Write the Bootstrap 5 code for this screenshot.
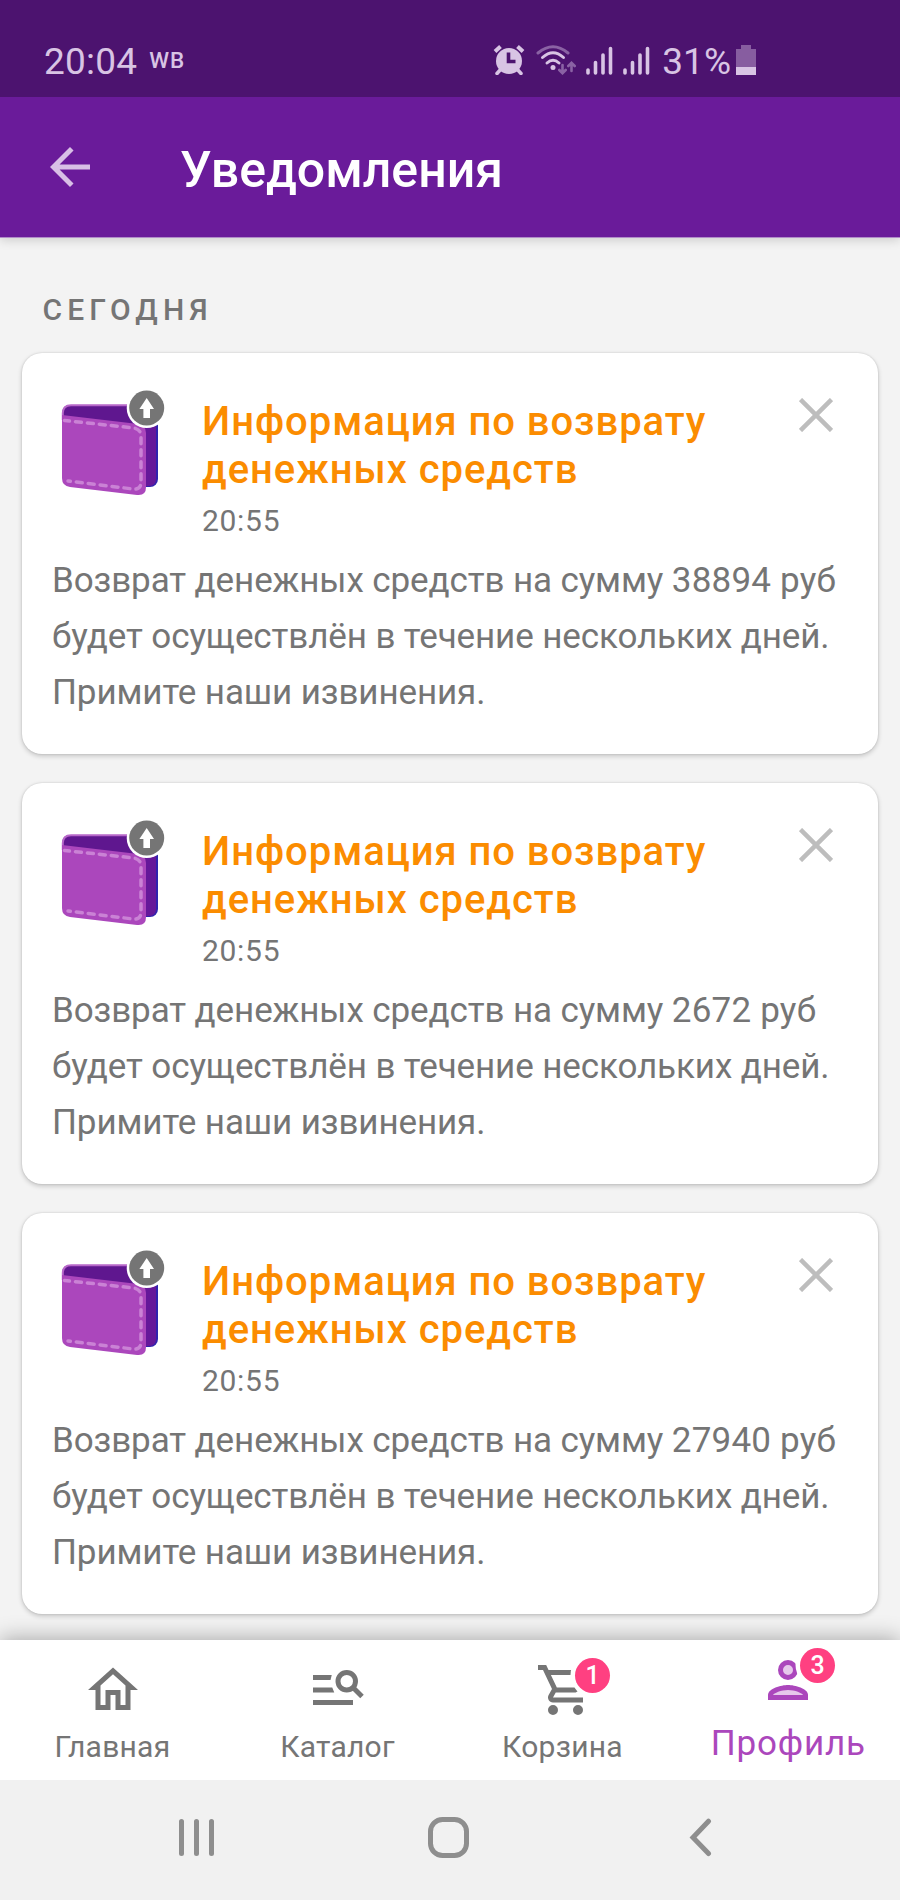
<!DOCTYPE html>
<html lang="ru">
<head>
<meta charset="utf-8">
<meta name="viewport" content="width=device-width, initial-scale=1">
<title>Уведомления</title>
<link href="https://cdn.jsdelivr.net/npm/bootstrap@5.3.0/dist/css/bootstrap.min.css" rel="stylesheet">
<script src="https://cdn.jsdelivr.net/npm/bootstrap@5.3.0/dist/js/bootstrap.bundle.min.js"></script>
<style>
body{font-family:Roboto,"Liberation Sans",sans-serif;background:#f3f3f3;color:#757575;width:900px;height:1900px;overflow:hidden}
svg{display:block;flex:none}
.status{height:97px;background:#4c136f;color:#d8c4e4;font-size:37px;line-height:44px;padding:39px 144px 0 44px;position:relative;z-index:1}
.status .clock{letter-spacing:.2px}
.status .clock,.status .level{padding-top:1px}
.status svg{margin-top:6px}
.carrier{font-size:22.5px;font-weight:500;line-height:43px;margin-left:12px;letter-spacing:1px}
.appbar{height:141px;background:#6a1b9a;border-bottom:1px solid #b18cc9;box-shadow:0 2px 10px rgba(0,0,0,.16);padding:0 40px;position:relative}
.appbar h1{font-size:50px;font-weight:500;color:#fff;line-height:60px;margin:6px 0 0 80px}
.feed{height:1402px;padding:54px 22px 0}
.day{font-size:30px;font-weight:500;line-height:36px;letter-spacing:5.1px;margin:0 0 25px 20.5px}
.note{height:401px;margin-bottom:29px;border:0;border-radius:20px;color:#757575;padding:45px 29px 0 30px;box-shadow:0 2px 5px rgba(0,0,0,.2),0 0 2px rgba(0,0,0,.14)}
.note h2{font-size:40px;font-weight:500;line-height:48px;color:#fb8c00;margin:0;letter-spacing:.95px}
.note time{display:block;font-size:30px;line-height:36px;margin-top:9px;letter-spacing:.7px}
.note p{font-size:35px;line-height:56px;margin:14px 0 0;white-space:nowrap;letter-spacing:-.11px}
.sum{letter-spacing:.2px}
.wallet{margin:-8px 0 0}
.head-text{margin-left:36px;width:560px}
.close-x{border:0;background:none;padding:0;margin:0 16px 0 auto}
.tabs{height:140px;background:#fff;position:relative;box-shadow:0 -2px 20px rgba(0,0,0,.3)}
.tab{width:225px;padding-top:20px;font-size:30px;line-height:36px;letter-spacing:.25px;color:#757575;text-decoration:none}
.tab .lbl{margin-top:8.5px}
.tab.on{color:#ab47bc;font-size:35px;padding-top:10px;letter-spacing:.8px}
.tab.on .lbl{margin:16px 0 0 1.5px}
.ico{position:relative}
.count{position:absolute;left:42.5px;top:-2.5px;width:35px;height:35px;border-radius:50%;background:#ff4081;color:#fff;font-size:25px;font-weight:500;line-height:35px;text-align:center;letter-spacing:0}
.sys{height:120px;background:#f1f1f1;padding:37px 188.5px 0 179px;position:relative}
.sys .home{margin-right:7px}
</style>
</head>
<body>
<svg width="0" height="0" class="position-absolute">
 <symbol id="wallet" viewBox="0 0 114 108">
  <rect x="60" y="16" width="46" height="81" rx="8" fill="#3023ae"/>
  <path d="M20 15H97q7 0 7 7V89q0 7-7 7H60Z" fill="#65189a"/>
  <path d="M10 24q0-9 8-9H80V50L10 36Z" fill="#5f178f"/>
  <path d="M10.800 30V23Q11 15.200 19 15.200H80" fill="none" stroke="#b767c9" stroke-width="2"/>
  <path d="M10 25 86 34q8 1 8 9V97q0 9-9 8L18 97q-8-1-8-9Z" fill="#ab47bc"/>
  <path d="M12.500 30.500 82 38q7 1.500 7 8V92q0 8-8 7L16 91" fill="none" stroke="#ca82d5" stroke-width="3.500" stroke-linecap="round" stroke-dasharray="6 6" stroke-dashoffset="1"/>
  <circle cx="94.700" cy="18" r="20" fill="#fff"/>
  <circle cx="94.700" cy="18" r="17.500" fill="#757575"/>
  <path d="M94.700 8 102 19H98V28H91.400V19H87.400Z" fill="#fff"/>
 </symbol>
 <symbol id="signal" viewBox="0 0 27 30">
  <path d="M2 25V28M9.500 17.500V28M17 10V28M24.500 3.500V28" stroke="currentColor" stroke-width="3.600" stroke-linecap="round"/>
 </symbol>
 <symbol id="cross" viewBox="0 0 34 34">
  <path d="M1.500 1.500 32.500 32.500M32.500 1.500 1.500 32.500" stroke="#bdbdbd" stroke-width="4.500"/>
 </symbol>
</svg>

<div class="status d-flex">
 <span class="clock">20:04</span><span class="carrier">WB</span>
 <div class="d-flex ms-auto">
  <svg width="43" height="30" viewBox="0 0 43 30" fill="none" stroke="currentColor">
   <path d="M2 6.500 7.500 1.500M24.500 1.500 30 6.500" stroke-width="4"/>
   <path d="M8 24 4 28.500M24 24 28 28.500" stroke-width="3.500" stroke-linecap="round"/>
   <circle cx="16" cy="16" r="13" fill="currentColor" stroke="none"/>
   <path d="M15.500 7.500V16.500H22.500" stroke="#4c136f" stroke-width="3.600"/>
  </svg>
  <svg width="50" height="30" viewBox="0 0 50 30" fill="none" stroke="currentColor" stroke-linecap="round">
   <path d="M2 8Q17-4.500 32 8" stroke-width="3" opacity=".45"/>
   <path d="M6.500 12.500Q17 3 27.500 12.500M11 18Q17 12.500 23 18" stroke-width="3"/>
   <circle cx="17" cy="22.500" r="2.500" fill="currentColor" stroke="none"/>
   <path d="M26.500 20V28M23.300 25 26.500 28.200 29.700 25M35.500 26V18M32.300 21 35.500 17.800 38.700 21" stroke-width="2.600" opacity=".45"/>
  </svg>
  <svg width="37" height="30"><use href="#signal" width="27" height="30"/></svg>
  <svg width="39" height="30"><use href="#signal" width="27" height="30"/></svg>
  <span class="level">31%</span>
  <svg width="25" height="30" viewBox="-5 0 25 30" fill="currentColor">
   <path d="M5 0H15V4H20V22H0V4H5Z" opacity=".42"/><path d="M0 22H20V30H0Z"/>
  </svg>
 </div>
</div>

<header class="appbar d-flex align-items-center">
 <svg width="60" height="60" viewBox="0 0 24 24" fill="#d8bfe6"><path d="M20 11H7.830l5.590-5.590L12 4l-8 8 8 8 1.410-1.410L7.830 13H20z"/></svg>
 <h1>Уведомления</h1>
</header>

<main class="feed">
 <div class="day">СЕГОДНЯ</div>
 <article class="card note">
  <div class="d-flex align-items-start">
   <svg class="wallet" width="114" height="108"><use href="#wallet"/></svg>
   <div class="head-text"><h2>Информация по возврату<br>денежных средств</h2><time>20:55</time></div>
   <button class="close-x" aria-label="Закрыть"><svg width="34" height="34"><use href="#cross"/></svg></button>
  </div>
  <p>Возврат денежных средств на сумму <span class="sum">38894 руб</span><br>будет осуществлён в течение нескольких дней.<br>Примите наши извинения.</p>
 </article>
 <article class="card note">
  <div class="d-flex align-items-start">
   <svg class="wallet" width="114" height="108"><use href="#wallet"/></svg>
   <div class="head-text"><h2>Информация по возврату<br>денежных средств</h2><time>20:55</time></div>
   <button class="close-x" aria-label="Закрыть"><svg width="34" height="34"><use href="#cross"/></svg></button>
  </div>
  <p>Возврат денежных средств на сумму <span class="sum">2672 руб</span><br>будет осуществлён в течение нескольких дней.<br>Примите наши извинения.</p>
 </article>
 <article class="card note">
  <div class="d-flex align-items-start">
   <svg class="wallet" width="114" height="108"><use href="#wallet"/></svg>
   <div class="head-text"><h2>Информация по возврату<br>денежных средств</h2><time>20:55</time></div>
   <button class="close-x" aria-label="Закрыть"><svg width="34" height="34"><use href="#cross"/></svg></button>
  </div>
  <p>Возврат денежных средств на сумму <span class="sum">27940 руб</span><br>будет осуществлён в течение нескольких дней.<br>Примите наши извинения.</p>
 </article>
</main>

<nav class="tabs d-flex">
 <a class="tab d-flex flex-column align-items-center" href="#">
  <svg width="60" height="60" viewBox="0 0 24 24" fill="#757575"><path d="M12 5.690l5 4.500V18h-2v-6H9v6H7v-7.810l5-4.500M12 3L2 12h3v8h6v-6h2v6h6v-8h3z"/></svg>
  <span class="lbl">Главная</span>
 </a>
 <a class="tab d-flex flex-column align-items-center" href="#">
  <svg width="60" height="60" viewBox="0 0 24 24" fill="#757575"><path d="M2 6H9.500L9 8H2ZM2 11H9.700L10.500 13H2ZM2 16H18V18H2Z"/><g fill="none" stroke="#757575" stroke-width="2"><circle cx="15.500" cy="8.500" r="3.500"/><path d="M17.800 10.800 21.600 14.600"/></g></svg>
  <span class="lbl">Каталог</span>
 </a>
 <a class="tab d-flex flex-column align-items-center" href="#">
  <div class="ico"><svg width="60" height="60" viewBox="-1 0 24 24" fill="#757575"><path d="M15.550 13c.75 0 1.410-.41 1.750-1.030l3.580-6.490A.996.996 0 0020.010 4H5.210l-.94-2H1v2h2l3.600 7.590-1.350 2.440C4.520 15.370 5.480 17 7 17h12v-2H7l1.100-2h7.450zM6.160 6h12.150l-2.760 5H8.530L6.160 6zM7 18a2 2 0 100 4 2 2 0 000-4zm10 0a2 2 0 100 4 2 2 0 000-4z"/><circle cx="23" cy="6" r="9" fill="#fff"/></svg><span class="count">1</span></div>
  <span class="lbl">Корзина</span>
 </a>
 <a class="tab on d-flex flex-column align-items-center" href="#">
  <div class="ico"><svg width="60" height="60" viewBox="0 0 24 24"><circle cx="12" cy="8" r="3" fill="#e6c8eb" stroke="#ab47bc" stroke-width="2"/><path d="M12 14c-2.670 0-8 1.340-8 4v2h16v-2c0-2.660-5.330-4-8-4z" fill="#ab47bc"/><path d="M12 16c-2.690 0-5.770 1.280-6 2h12c-.2-.71-3.300-2-6-2z" fill="#e6c8eb"/><circle cx="24" cy="6" r="9" fill="#fff"/></svg><span class="count">3</span></div>
  <span class="lbl">Профиль</span>
 </a>
</nav>

<footer class="sys d-flex justify-content-between align-items-start">
 <svg width="36" height="40" viewBox="0 0 36 40" stroke="#8e8e8e" stroke-width="5" stroke-linecap="round"><path d="M2.500 4.500V36.500M17.500 4.500V36.500M32.500 4.500V36.500"/></svg>
 <svg class="home" width="41" height="41" viewBox="0 0 41 41" fill="none" stroke="#8e8e8e" stroke-width="5"><rect x="2.500" y="2.500" width="36" height="36" rx="12"/></svg>
 <svg width="23" height="40" viewBox="0 0 23 40" fill="none" stroke="#8e8e8e" stroke-width="5" stroke-linecap="round"><path d="M19.500 4.200 4 20.500 19.500 36.500"/></svg>
</footer>
</body>
</html>
